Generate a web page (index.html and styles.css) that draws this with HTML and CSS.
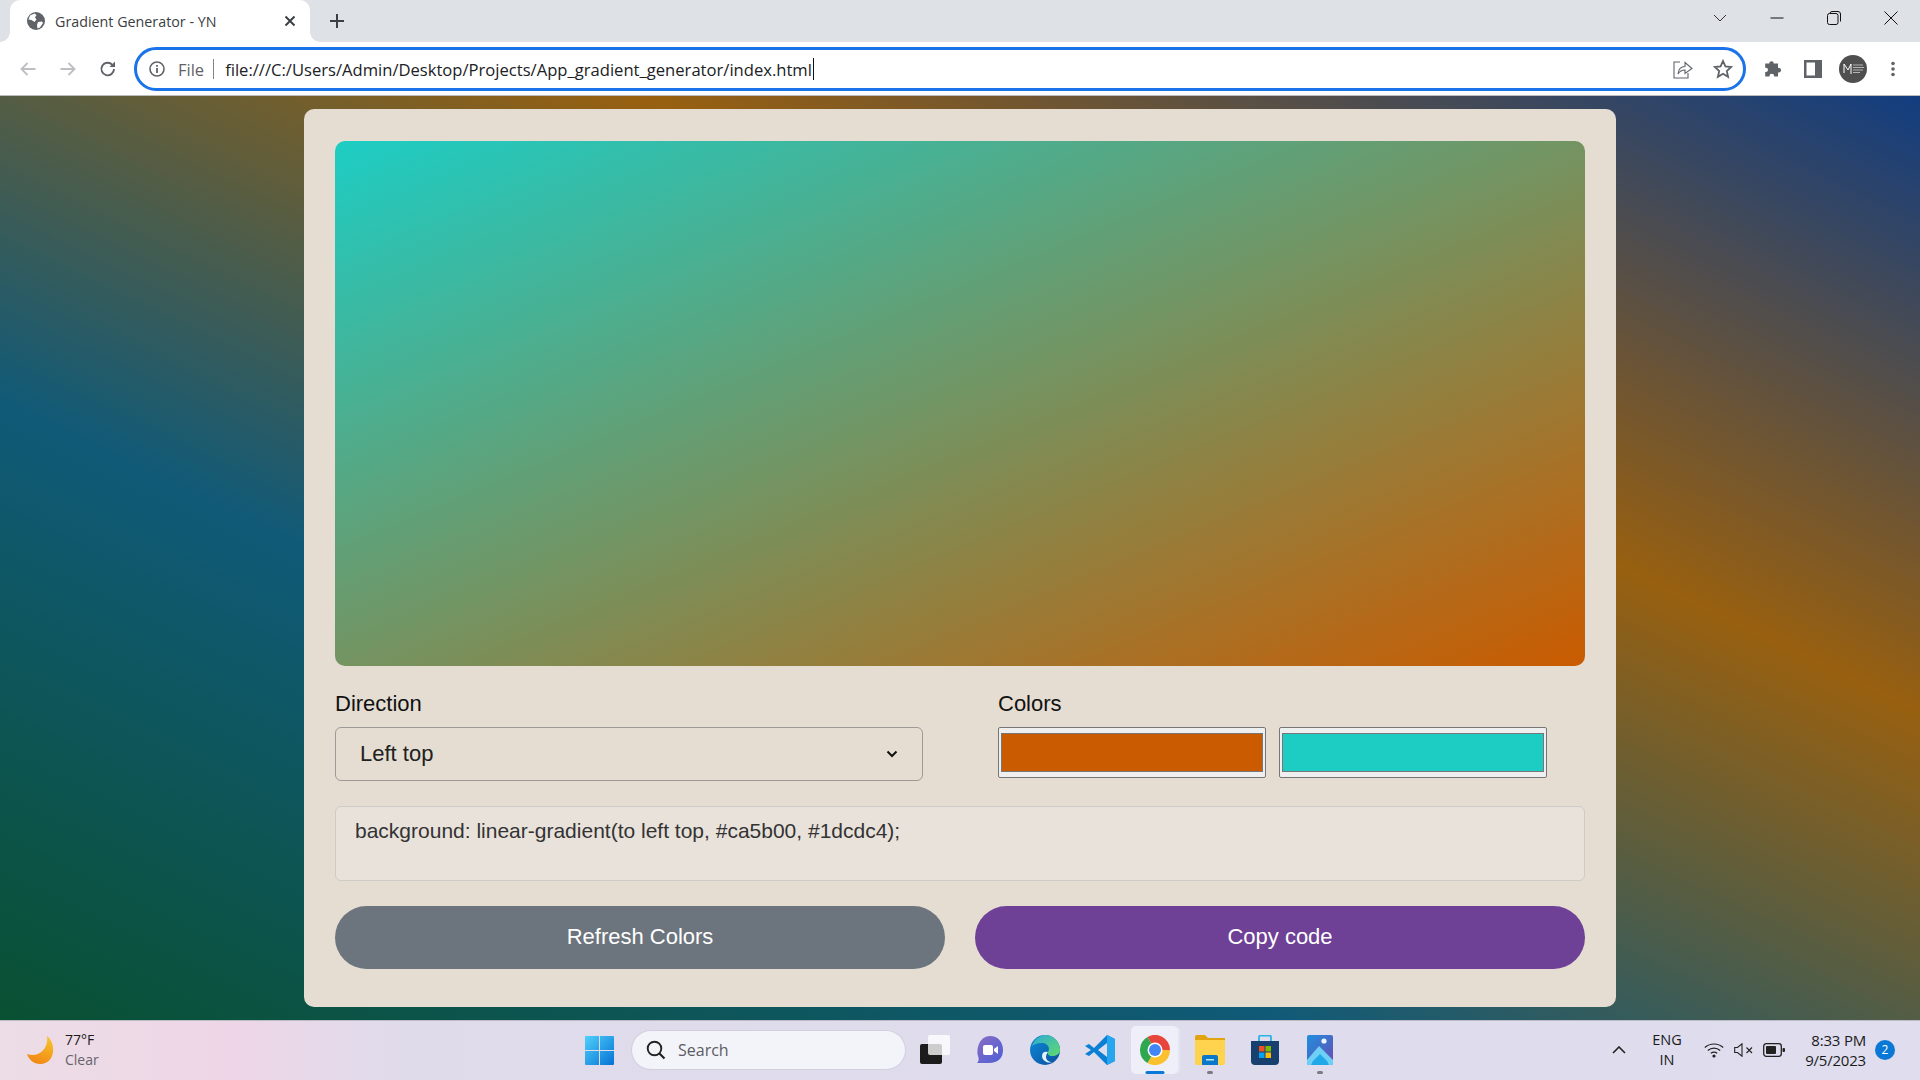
FILE: index.html
```html
<!DOCTYPE html>
<html lang="en">
<head>
<meta charset="utf-8">
<title>Gradient Generator - YN</title>
<link rel="stylesheet" href="styles.css">
</head>
<body>
<header class="tabstrip">
  <div class="tab">
    <svg class="favicon" viewBox="0 0 18 18"><circle cx="9" cy="9" r="9" fill="#5f6368"/><path d="M3 3.5 7.5 1.5 9.5 3 8 5.5 9.5 7.5 7.5 10 4.5 8 1.5 7.5ZM11 10 15 9.5 16 11 13 15.5 10.5 16.5 10 13Z" fill="#fff"/></svg>
    <span class="tab-title">Gradient Generator - YN</span>
    <svg class="tab-close" viewBox="0 0 12 12"><path d="M1.5 1.5 10.5 10.5M10.5 1.5 1.5 10.5" stroke="#3c4043" stroke-width="2"/></svg>
  </div>
  <svg class="new-tab" viewBox="0 0 16 16"><path d="M8 1V15M1 8H15" stroke="#3c4043" stroke-width="2"/></svg>
  <div class="window-controls">
    <span class="win-chevron"><svg class="win-icon" viewBox="0 0 14 14"><path d="M1 4 7 10 13 4" fill="none" stroke="#333" stroke-width="1"/></svg></span>
    <span class="win-btn"><svg class="win-icon" viewBox="0 0 14 14"><path d="M0.5 7H13.5" stroke="#111" stroke-width="1"/></svg></span>
    <span class="win-btn"><svg class="win-icon" viewBox="0 0 14 14"><path d="M3 2.5Q3 .5 5 .5H11Q13.5 .5 13.5 3V10.5" fill="none" stroke="#111"/><rect x=".5" y="2.5" width="10.500" height="11" rx="2" fill="none" stroke="#111"/></svg></span>
    <span class="win-btn"><svg class="win-icon" viewBox="0 0 14 14"><path d="M.5 .5 13.500 13.500M13.500 .5 .5 13.500" stroke="#111" stroke-width="1"/></svg></span>
  </div>
</header>

<nav class="toolbar">
  <span class="nav-btn"><svg class="icon-18" viewBox="0 0 18 18"><path d="M16.500 9H2.500M8.500 3 2.500 9 8.500 15" fill="none" stroke="#bcbec1" stroke-width="1.800"/></svg></span>
  <span class="nav-btn"><svg class="icon-18" viewBox="0 0 18 18"><path d="M1.500 9H15.500M9.500 3 15.500 9 9.500 15" fill="none" stroke="#bcbec1" stroke-width="1.800"/></svg></span>
  <span class="nav-btn"><svg class="icon-18" viewBox="0 0 18 18"><path d="M15 9A6.300 6.300 0 1 1 13.200 4.600" fill="none" stroke="#5f6368" stroke-width="1.900"/><path d="M16 1.500V7H10.500Z" fill="#5f6368"/></svg></span>
  <div class="omnibox">
    <svg class="info" viewBox="0 0 16 16"><circle cx="8" cy="8" r="7" fill="none" stroke="#5f6368" stroke-width="1.600"/><path d="M8 7V12M8 4V5.800" stroke="#5f6368" stroke-width="1.800"/></svg>
    <span class="scheme">File</span>
    <span class="sep"></span>
    <span class="url">file:///C:/Users/Admin/Desktop/Projects/App_gradient_generator/index.html</span>
    <svg class="omni-share" viewBox="0 0 20 20"><path d="M7 3H1V19H15V14" fill="none" stroke="#5f6368" stroke-width="1.100"/><path d="M5 15C5.500 10 8.500 7.500 12 7.500V3.500L19 9.500 12 14.500V11C9 11 6.500 12.500 5 15Z" fill="none" stroke="#5f6368" stroke-width="1.100"/></svg>
    <svg class="omni-star" viewBox="0 0 20 20"><path d="M10 2 12.400 7.400 18.200 8 13.800 12 15.100 17.800 10 14.800 4.900 17.800 6.200 12 1.800 8 7.600 7.400Z" fill="none" stroke="#5f6368" stroke-width="1.800"/></svg>
  </div>
  <span class="nav-btn"><svg class="icon-18" viewBox="0 0 18 18"><path d="M6.500 1.500Q9.500 .5 9.800 3.500H14V7.800Q17.500 8 17 10.800 16.500 13 14 12.500V16.500H10Q10.500 13.800 7.800 13.800 5.200 13.800 5.500 16.500H1.200V12Q4 12.300 4 9.800 4 7.500 1.200 7.800V3.500H5.500Q5 2 6.500 1.500Z" fill="#5f6368"/></svg></span>
  <span class="nav-btn"><svg class="icon-18" viewBox="0 0 18 18"><path d="M0 0H18V18H0ZM2.500 2.500V15.500H11V2.500Z" fill="#5f6368" fill-rule="evenodd"/></svg></span>
  <span class="nav-btn"><span class="avatar"><svg class="avatar-mark" viewBox="0 0 28 28"><path d="M5 18V9L9 15 12 9V19" fill="none" stroke="#fff" stroke-width="1"/><path d="M14 10H24M14 12.500H25M14 15H24M14 17.500H21" stroke="#b5b5b5" stroke-width="1"/></svg></span></span>
  <span class="nav-btn"><svg class="icon-18" viewBox="0 0 18 18"><circle cx="9" cy="3.500" r="1.800" fill="#5f6368"/><circle cx="9" cy="9" r="1.800" fill="#5f6368"/><circle cx="9" cy="14.500" r="1.800" fill="#5f6368"/></svg></span>
</nav>

<main class="desktop">
  <section class="panel">
    <div class="preview"></div>
    <div class="controls">
      <div class="control">
        <label class="label" for="direction">Direction</label>
        <div class="select-wrap">
          <select class="select" id="direction">
            <option>Left top</option>
          </select>
          <svg class="select-arrow" viewBox="0 0 12 8"><path d="M1.500 1.500 6 6 10.500 1.500" fill="none" stroke="#111" stroke-width="2"/></svg>
        </div>
      </div>
      <div class="control">
        <span class="label">Colors</span>
        <div class="swatches">
          <input class="swatch" type="color" value="#ca5b00" aria-label="First color">
          <input class="swatch" type="color" value="#1dcdc4" aria-label="Second color">
        </div>
      </div>
    </div>
    <div class="code">background: linear-gradient(to left top, #ca5b00, #1dcdc4);</div>
    <div class="actions">
      <button class="btn btn-refresh" type="button">Refresh Colors</button>
      <button class="btn btn-copy" type="button">Copy code</button>
    </div>
  </section>
</main>

<footer class="taskbar">
  <div class="tb-left">
    <svg class="moon" viewBox="0 0 28 28"><defs><linearGradient id="moonfill" x1="0.700" y1="0" x2="0.300" y2="1"><stop offset="0" stop-color="#f6c22e"/><stop offset="1" stop-color="#f28512"/></linearGradient></defs><path d="M20 0C30 8 28 28 13 28 7 28 2 24 0 18 10 22 22 14 20 0Z" fill="url(#moonfill)"/></svg>
    <div class="weather">
      <span class="temp">77°F</span>
      <span class="cond">Clear</span>
    </div>
  </div>
  <div class="tb-center">
    <svg class="start" viewBox="0 0 29 29"><defs><linearGradient id="startfill" x1="0" y1="0" x2="1" y2="1"><stop offset="0" stop-color="#4fd0fb"/><stop offset="1" stop-color="#0572d4"/></linearGradient></defs><path d="M1 0H14V14H0V1Q0 0 1 0ZM15 0H28Q29 0 29 1V14H15ZM0 15H14V29H1Q0 29 0 28ZM15 15H29V28Q29 29 28 29H15Z" fill="url(#startfill)"/></svg>
    <div class="search">
      <svg class="search-icon" viewBox="0 0 20 20"><circle cx="8.500" cy="8.500" r="6.800" fill="none" stroke="#222" stroke-width="1.900"/><path d="M13.500 13.500 18.500 18.500" stroke="#222" stroke-width="2.200"/></svg>
      <span class="search-text">Search</span>
    </div>
    <div class="slots">
      <span class="slot"><svg class="app" viewBox="0 0 30 30"><rect x="0" y="9" width="22" height="20" rx="2" fill="#1c1c1c"/><rect x="8" y="0" width="22" height="20" rx="2" fill="#fff" fill-opacity=".78"/></svg></span>
      <span class="slot"><svg class="app" viewBox="0 0 30 30"><defs><linearGradient id="chatfill" x1="0" y1="0" x2="1" y2="1"><stop offset="0" stop-color="#8a6cc4"/><stop offset="1" stop-color="#4d5fd6"/></linearGradient></defs><path d="M15 1C23 1 28 7 28 15 28 23 23 28 14 28H2C4 26 4 24 3 21 1 13 5 1 15 1Z" fill="url(#chatfill)"/><rect x="8" y="10" width="10" height="10" rx="2" fill="#fff"/><path d="M19 14 23 11V19L19 16Z" fill="#fff"/></svg></span>
      <span class="slot"><svg class="app" viewBox="0 0 30 30"><defs><linearGradient id="edgeblue" x1="0" y1="0" x2="1" y2="1"><stop offset="0" stop-color="#0d8cd8"/><stop offset="1" stop-color="#0b4f9e"/></linearGradient><linearGradient id="edgegreen" x1="0" y1="0" x2="1" y2="1"><stop offset="0" stop-color="#2fa9d8"/><stop offset="1" stop-color="#5fdc6a"/></linearGradient></defs><circle cx="15" cy="15" r="15" fill="url(#edgeblue)"/><path d="M2 11C5 2 13 0 15 0 24 0 30 7 30 15 30 19 26 21 22 21 19 21 17 19 18 17 20 14 19 9 13 8 8 7.500 4 9 2 11Z" fill="url(#edgegreen)"/><path d="M18 17C15 16 12 17 12 21 12 25 17 29 22 27 19 27 16 25 16 22 16 20 17 18 18 17Z" fill="#dff3f8"/></svg></span>
      <span class="slot"><svg class="app" viewBox="0 0 30 30"><path d="M22 0 9 13 4 9 0 11 6 15 0 19 4 21 9 17 22 30 30 26V4ZM22 8 13 15 22 22Z" fill="#0b7fd4" fill-rule="evenodd"/><path d="M22 0 30 4V26L22 30Z" fill="#27a6f0"/></svg></span>
      <span class="slot slot-active"><svg class="app" viewBox="0 0 30 30"><path d="M15 15 7.500 2A15 15 0 0 1 30 15Z" fill="#e8453c"/><path d="M15 15H30A15 15 0 0 1 7.500 28Z" fill="#fbc02d"/><path d="M15 15 7.500 28A15 15 0 0 1 7.500 2Z" fill="#2fa650"/><circle cx="15" cy="15" r="7.500" fill="#fff"/><circle cx="15" cy="15" r="6" fill="#4285f4"/></svg></span>
      <span class="slot slot-open"><svg class="app" viewBox="0 0 30 30"><path d="M0 2Q0 0 2 0H10L13 3H30V8H0Z" fill="#e2a40e"/><path d="M0 5H30V28Q30 30 28 30H2Q0 30 0 28Z" fill="#ffd34d"/><path d="M7 22Q7 20 9 20H21Q23 20 23 22V30H7Z" fill="#0a78c8"/><rect x="11" y="24" width="8" height="1.500" fill="#bfe3f7"/></svg></span>
      <span class="slot"><svg class="app" viewBox="0 0 30 30"><path d="M9 8V2Q9 .5 11 .5H19Q21 .5 21 2V8" fill="none" stroke="#27b4e8" stroke-width="1.800"/><path d="M1 6H29V26Q29 30 25 30H5Q1 30 1 26Z" fill="#17406f"/><rect x="9" y="11" width="5.500" height="5.500" fill="#f25022"/><rect x="15.500" y="11" width="5.500" height="5.500" fill="#7fba00"/><rect x="9" y="17.500" width="5.500" height="5.500" fill="#00a4ef"/><rect x="15.500" y="17.500" width="5.500" height="5.500" fill="#ffb900"/></svg></span>
      <span class="slot slot-open"><svg class="app app-narrow" viewBox="2 0 26 30"><defs><linearGradient id="photobg" x1="0" y1="0" x2="1" y2="1"><stop offset="0" stop-color="#1d90e0"/><stop offset="1" stop-color="#6a4ab0"/></linearGradient></defs><path d="M4 0H26Q28 0 28 2V28Q28 30 26 30H4Q2 30 2 28V2Q2 0 4 0Z" fill="url(#photobg)"/><circle cx="19" cy="6" r="2.600" fill="#eef4ff"/><path d="M2 25 14 11 28 25V28Q28 30 26 30H4Q2 30 2 28Z" fill="#6fd0f5"/><path d="M8 26 15 19 22 26 24 30H6Z" fill="#20a8e8"/></svg></span>
    </div>
  </div>
  <div class="tray">
    <svg class="tray-chevron" viewBox="0 0 14 8"><path d="M1 7 7 1 13 7" fill="none" stroke="#222" stroke-width="1.600"/></svg>
    <div class="lang"><span>ENG</span><span>IN</span></div>
    <svg class="tray-wifi" viewBox="0 0 20 16"><path d="M.8 5.500C6 .8 14 .8 19.200 5.500M3.800 8.500C7.500 5.200 12.500 5.200 16.200 8.500M6.800 11.300C8.800 9.700 11.200 9.700 13.200 11.300" fill="none" stroke="#222" stroke-width="1.200"/><circle cx="10" cy="14" r="1.600" fill="#222"/></svg>
    <svg class="tray-sound" viewBox="0 0 20 14"><path d="M.7 4.500H3.500L8 .8V13.200L3.500 9.500H.7Z" fill="none" stroke="#222" stroke-width="1.100"/><path d="M12.500 4.500 18 10M18 4.500 12.500 10" stroke="#222" stroke-width="1.100"/></svg>
    <svg class="tray-battery" viewBox="0 0 22 14"><rect x=".7" y=".7" width="17.600" height="12.600" rx="2.500" fill="none" stroke="#222" stroke-width="1.300"/><rect x="3" y="3" width="10" height="8" rx="1" fill="#222"/><rect x="19.500" y="5" width="2.500" height="4" rx="1" fill="#222"/></svg>
    <div class="clock"><span>8:33 PM</span><span>9/5/2023</span></div>
    <span class="badge">2</span>
  </div>
</footer>
</body>
</html>
```
FILE: styles.css
```css
* { box-sizing: border-box; }
html, body { height: 100%; }
body {
  margin: 0;
  height: 100vh;
  display: flex;
  flex-direction: column;
  overflow: hidden;
  font-family: "Liberation Sans", Arial, sans-serif;
}

/* browser chrome */
.tabstrip {
  height: 42px;
  flex: none;
  display: flex;
  align-items: flex-start;
  padding-left: 10px;
  background: #dee1e6;
  font-family: "Open Sans", sans-serif;
}
.tab {
  position: relative;
  width: 300px;
  height: 42px;
  display: flex;
  align-items: center;
  padding: 0 14px 0 17px;
  background: #fff;
  border-radius: 10px 10px 0 0;
}
.tab::before, .tab::after {
  content: "";
  position: absolute;
  bottom: 0;
  width: 10px;
  height: 10px;
}
.tab::before { left: -10px; background: radial-gradient(circle at 0 0, transparent 9.5px, #fff 10px); }
.tab::after { right: -10px; background: radial-gradient(circle at 100% 0, transparent 9.5px, #fff 10px); }
.favicon { width: 18px; height: 18px; flex: none; }
.tab-title { margin-left: 10px; font-size: 14.300px; color: #3c4043; white-space: nowrap; flex: 1; }
.tab-close { width: 12px; height: 12px; flex: none; }
.new-tab { width: 16px; height: 16px; margin: 13px 0 0 19px; flex: none; }
.window-controls { margin-left: auto; display: flex; align-items: center; height: 36px; }
.win-chevron { width: 40px; margin-right: 8px; display: flex; justify-content: center; }
.win-btn { width: 57.330px; display: flex; justify-content: center; }
.win-icon { width: 14px; height: 14px; }

.toolbar {
  height: 54px;
  flex: none;
  display: flex;
  align-items: center;
  padding: 1px 6px 0 8px;
  background: #fff;
  border-bottom: 1px solid #bdbdbd;
  font-family: "Open Sans", sans-serif;
}
.nav-btn { width: 40px; height: 40px; flex: none; display: flex; align-items: center; justify-content: center; }
.icon-18 { width: 18px; height: 18px; }
.omnibox {
  width: 1612px;
  height: 44px;
  margin: 0 7px 0 6px;
  flex: none;
  display: flex;
  align-items: center;
  padding: 0 10px 0 12px;
  border: 3px solid #1a73e8;
  border-radius: 22px;
  background: #fff;
}
.info { width: 16px; height: 16px; flex: none; }
.scheme { margin-left: 13px; font-size: 16.500px; color: #5f6368; }
.sep { width: 1px; height: 20px; margin: 0 11px 0 9px; background: #80868b; }
.url {
  flex: 1;
  display: flex;
  align-items: center;
  font-size: 16.600px;
  color: #202124;
  white-space: nowrap;
}
.url::after { content: ""; width: 1px; height: 22px; margin-left: 1px; background: #111; }
.omni-share { width: 20px; height: 20px; flex: none; margin-right: 20px; }
.omni-star { width: 20px; height: 20px; flex: none; }
.avatar {
  width: 28px;
  height: 28px;
  border-radius: 50%;
  background: #4f4f4f;
  display: block;
}
.avatar-mark { width: 28px; height: 28px; display: block; }

/* page */
.desktop {
  flex: 1;
  min-height: 0;
  display: flex;
  justify-content: center;
  align-items: flex-start;
  padding-top: 13px;
  background: linear-gradient(to bottom left, #123d80, #986010 33.300%, #105a78 66.600%, #0a5032);
}
.panel {
  width: 1312px;
  height: 898px;
  display: flex;
  flex-direction: column;
  gap: 25px;
  padding: 32px 31px 38px;
  background: #e5ddd2;
  border-radius: 10px;
}
.preview {
  height: 525px;
  flex: none;
  border-radius: 10px;
  background: linear-gradient(to left top, #ca5b00, #1dcdc4);
}
.controls { display: flex; justify-content: space-between; }
.control { width: 587px; display: flex; flex-direction: column; }
.control:first-child { width: 588px; }
.label { font-size: 22px; line-height: 25px; margin-bottom: 11px; color: #111; display: block; }
.select-wrap { position: relative; height: 54px; }
.select {
  appearance: none;
  width: 100%;
  height: 54px;
  padding: 0 24px 2px;
  font: inherit;
  font-size: 22px;
  color: #212121;
  background: transparent;
  border: 1px solid #9d9a97;
  border-radius: 6px;
}
.select-arrow { position: absolute; right: 25px; top: 23px; width: 12px; height: 8px; }
.swatches { display: flex; gap: 13px; }
.swatch {
  width: 268px;
  height: 51px;
  padding: 5px 2px;
  background: #efefef;
  border: 1px solid #767676;
  border-radius: 2px;
}
.swatch::-webkit-color-swatch-wrapper { padding: 0; }
.code {
  height: 75px;
  flex: none;
  padding: 11px 19px;
  font-size: 21px;
  line-height: 26px;
  color: #333;
  background: #e9e2db;
  border: 1px solid #cfcbc6;
  border-radius: 6px;
}
.actions { display: flex; gap: 30px; }
.btn {
  flex: 1;
  height: 63px;
  padding: 0 0 2px;
  border: 0;
  border-radius: 32px;
  font: inherit;
  font-size: 22px;
  color: #fff;
}
.btn-refresh { background: #6c757d; }
.btn-copy { background: #6e4096; }

/* taskbar */
.taskbar {
  height: 60px;
  flex: none;
  display: flex;
  align-items: center;
  padding-bottom: 1px;
  border-top: 1px solid #b9bcc4;
  background: linear-gradient(to right, #ecdde6, #eed6e7 230px, #dfdbeb 400px, #dfddee);
  font-family: "Open Sans", sans-serif;
  color: #1b1b1b;
}
.tb-left { width: 585px; flex: none; display: flex; align-items: center; padding-left: 27px; }
.moon { width: 28px; height: 28px; flex: none; }
.weather { margin-left: 10px; display: flex; flex-direction: column; font-size: 14px; line-height: 20px; }
.cond { color: #66636b; }
.tb-center { display: flex; align-items: center; }
.start { width: 29px; height: 29px; flex: none; }
.search {
  width: 273px;
  height: 38px;
  margin-left: 18px;
  display: flex;
  align-items: center;
  padding-left: 14px;
  border-radius: 19px;
  background: #f3f3fa;
  box-shadow: 0 0 0 1px #d2d0e0;
}
.search-icon { width: 20px; height: 20px; flex: none; }
.search-text { margin-left: 12px; font-size: 16px; color: #5c5c62; }
.slots { margin-left: 6px; display: flex; gap: 8px; }
.slot {
  position: relative;
  width: 47px;
  height: 48px;
  display: flex;
  align-items: center;
  justify-content: center;
  border-radius: 5px;
}
.app { width: 30px; height: 30px; }
.app-narrow { width: 26px; }
.slot-active { background: #eeeff8; box-shadow: 3px 0 0 -1px #e6e6f2; }
.slot-active::after, .slot-open::after {
  content: "";
  position: absolute;
  left: 50%;
  bottom: 0;
  height: 3px;
  transform: translateX(-50%);
  border-radius: 2px;
}
.slot-active::after { width: 19px; background: #0a78d4; }
.slot-open::after { width: 6px; background: #7a7a82; }
.tray { margin-left: auto; display: flex; align-items: center; padding-right: 25px; font-size: 14.500px; }
.tray-chevron { width: 14px; height: 8px; flex: none; }
.lang { width: 40px; margin-left: 21px; display: flex; flex-direction: column; align-items: center; line-height: 20px; }
.tray-wifi { width: 20px; height: 16px; margin-left: 17px; flex: none; }
.tray-sound { width: 20px; height: 14px; margin-left: 10px; flex: none; }
.tray-battery { width: 22px; height: 14px; margin-left: 9px; flex: none; }
.clock { width: 70px; margin-left: 11px; display: flex; flex-direction: column; align-items: flex-end; font-size: 15px; line-height: 20px; letter-spacing: -.2px; }
.badge {
  width: 20px;
  height: 20px;
  margin-left: 9px;
  border-radius: 50%;
  background: #0a78d4;
  color: #fff;
  font-size: 12px;
  line-height: 20px;
  text-align: center;
}
```
